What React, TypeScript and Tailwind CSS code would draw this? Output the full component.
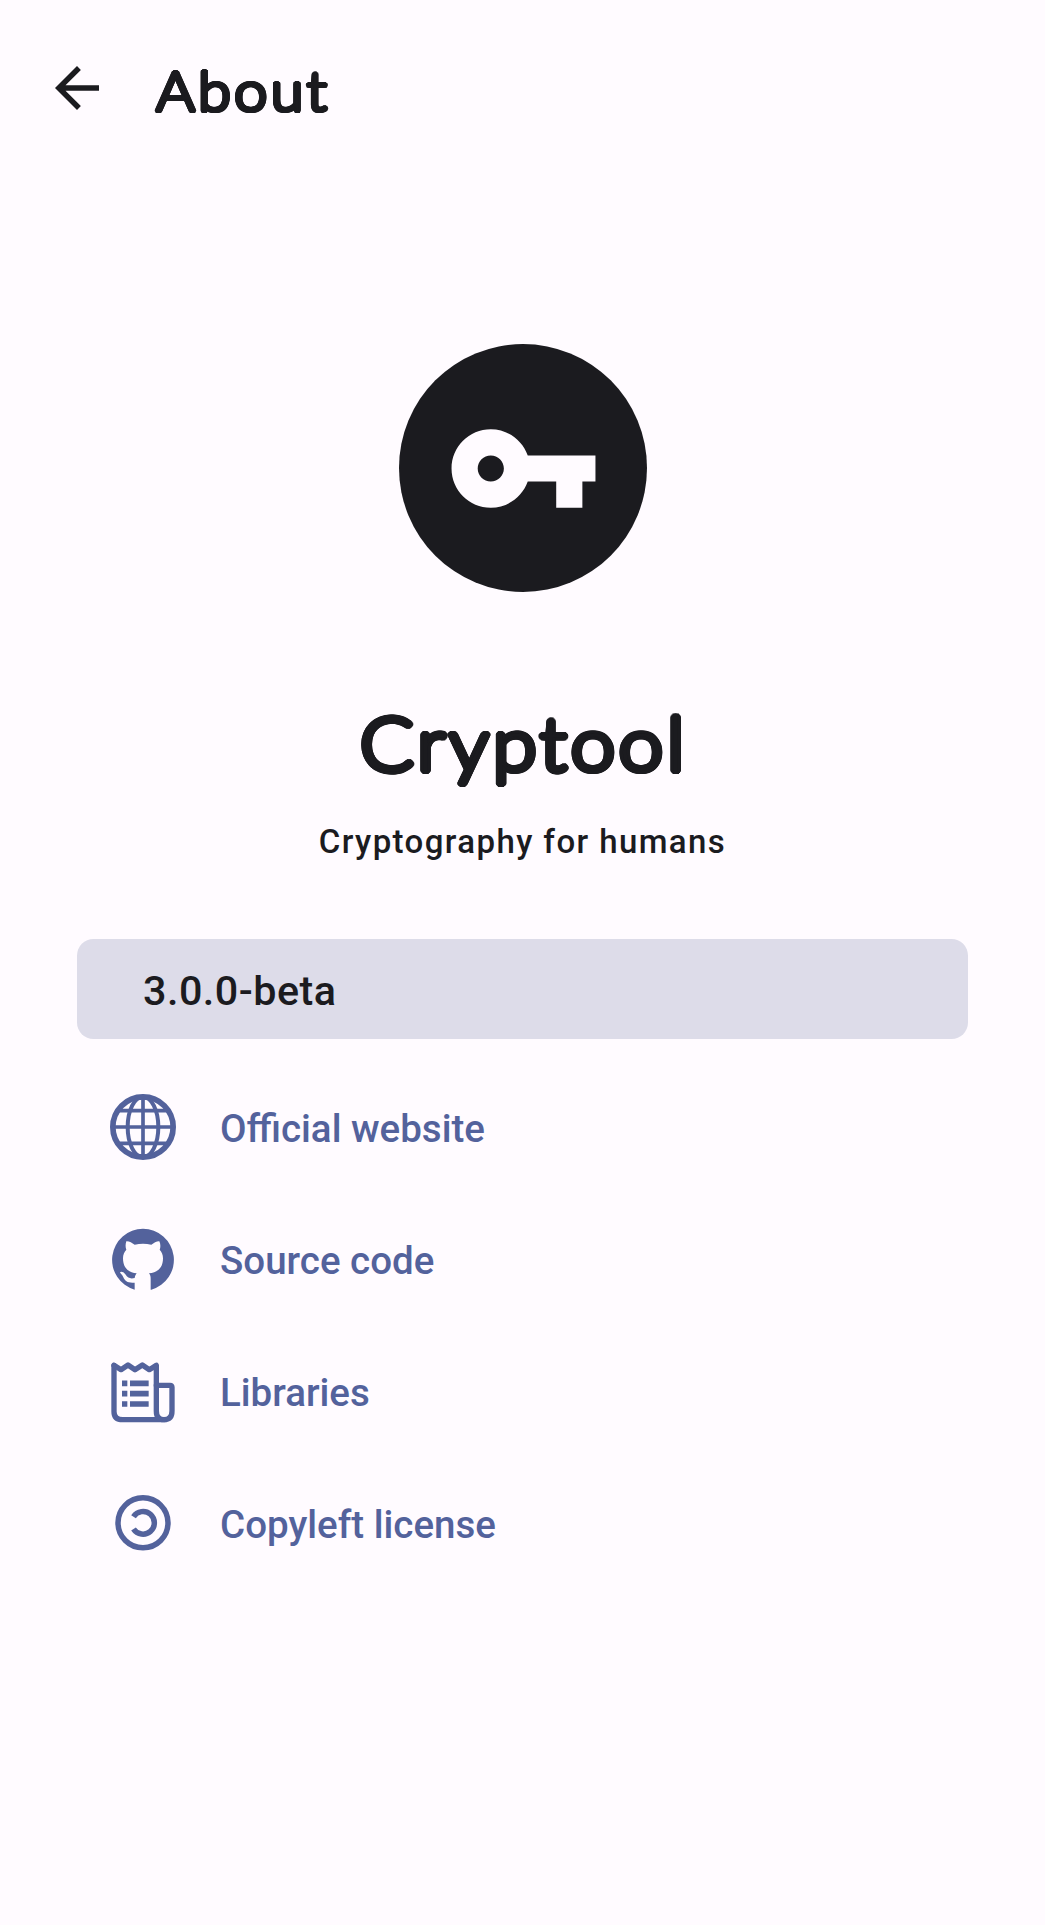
import type { ReactNode } from "react";

const roundedSmall =
  "[text-shadow:2.1px_0_currentColor,-2.1px_0_currentColor,0_2.1px_currentColor,0_-2.1px_currentColor,1.5px_1.5px_currentColor,-1.5px_1.5px_currentColor,1.5px_-1.5px_currentColor,-1.5px_-1.5px_currentColor,1.9px_0.8px_currentColor,-1.9px_0.8px_currentColor,1.9px_-0.8px_currentColor,-1.9px_-0.8px_currentColor,0.8px_1.9px_currentColor,-0.8px_1.9px_currentColor,0.8px_-1.9px_currentColor,-0.8px_-1.9px_currentColor]";

const roundedLarge =
  "[text-shadow:3.1px_0_currentColor,-3.1px_0_currentColor,0_3.1px_currentColor,0_-3.1px_currentColor,2.2px_2.2px_currentColor,-2.2px_2.2px_currentColor,2.2px_-2.2px_currentColor,-2.2px_-2.2px_currentColor,2.9px_1.2px_currentColor,-2.9px_1.2px_currentColor,2.9px_-1.2px_currentColor,-2.9px_-1.2px_currentColor,1.2px_2.9px_currentColor,-1.2px_2.9px_currentColor,1.2px_-2.9px_currentColor,-1.2px_-2.9px_currentColor]";

function BackArrow() {
  return (
    <svg className="size-[66px]" viewBox="0 0 24 24" fill="currentColor" aria-hidden="true">
      <path d="M20 11H7.83l5.59-5.59L12 4l-8 8 8 8 1.41-1.41L7.83 13H20v-2z" />
    </svg>
  );
}

function KeyIcon() {
  return (
    <svg className="size-[157px]" viewBox="0 0 24 24" fill="currentColor" aria-hidden="true">
      <path d="M12.65 10C11.83 7.67 9.61 6 7 6c-3.31 0-6 2.69-6 6s2.69 6 6 6c2.61 0 4.83-1.67 5.65-4H17v4h4v-4h2v-4H12.65zM7 14c-1.1 0-2-.9-2-2s.9-2 2-2 2 .9 2 2-.9 2-2 2z" />
    </svg>
  );
}

function GlobeIcon() {
  return (
    <svg className="size-[66px]" viewBox="60 42 198 198" fill="none" stroke="currentColor" aria-hidden="true">
      <circle cx="159" cy="141" r="90.5" strokeWidth="17" />
      <path strokeWidth="11" d="M159 50v182M68 141h182M84 92h150M84 190h150" />
      <ellipse cx="159" cy="141" rx="46" ry="91" strokeWidth="12" />
    </svg>
  );
}

function GithubIcon() {
  return (
    <svg className="size-[66px]" viewBox="60 33 198 198" fill="currentColor" aria-hidden="true">
      <path d="M159 41.500A93 93 0 0 0 134 224V203C114 205 105 199 100 187C97 179 91 176 90 172C92 169 101 170 106 178C114 190 122 192 134 189C135 183 137 179 140 175C114 172 99 158 99 130C99 119 103 111 109 104C106 96 106 88 109 79C117 78 126 84 134 89Q159 83 184 89C192 84 201 78 208 79C212 88 212 96 209 104C215 111 219 119 219 130C219 158 204 172 177 175C181 180 182 184 182 191V224H184A93 93 0 0 0 159 41.500Z" />
    </svg>
  );
}

function LibrariesIcon() {
  return (
    <svg className="size-[66px]" viewBox="60 24 198 198" fill="none" stroke="currentColor" strokeWidth="16" strokeLinejoin="round" aria-hidden="true">
      <path strokeLinecap="round" d="M72 46V185Q72 209 98 209H222Q246 209 246 183V112Q246 106 240 106H199" />
      <path strokeLinecap="round" d="M72 46L93 59L114 45L135 59L157 45L178 59L199 46V183Q199 209 222 209" />
      <path strokeWidth="17" d="M96 100h16M120 100h56M96 131h16M120 131h56M96 162h16M120 162h56" />
    </svg>
  );
}

function CopyleftIcon() {
  return (
    <svg className="size-[66px]" viewBox="60 30 198 198" fill="none" stroke="currentColor" aria-hidden="true">
      <circle cx="159" cy="128.500" r="75" strokeWidth="16.500" />
      <path strokeWidth="16.500" d="M130.500 110A34 34 0 1 1 130.500 147" />
    </svg>
  );
}

const links: { label: string; icon: ReactNode }[] = [
  { label: "Official website", icon: <GlobeIcon /> },
  { label: "Source code", icon: <GithubIcon /> },
  { label: "Libraries", icon: <LibrariesIcon /> },
  { label: "Copyleft license", icon: <CopyleftIcon /> },
];

export default function App() {
  return (
    <main className="flex h-[1925px] w-[1045px] flex-col overflow-hidden bg-[#fffbff] font-['Roboto',sans-serif] font-medium text-[#1b1b1f]">
      <header className="flex h-[176px] items-center pl-11">
        <button type="button" aria-label="Back">
          <BackArrow />
        </button>
        <h1 className={`ml-[46px] mt-[3px] origin-left scale-x-[1.08] font-['Lato',sans-serif] text-[55px] leading-[80px] font-light tracking-[3.1px] ${roundedSmall}`}>
          About
        </h1>
      </header>

      <section className="mt-[168px] flex flex-col items-center">
        <div className="ml-px flex size-[248px] items-center justify-center rounded-full bg-[#1b1b1f] text-[#fffbff]">
          <KeyIcon />
        </div>
        <h2 className={`mt-[96px] pl-[2px] scale-x-[1.08] font-['Lato',sans-serif] text-[74px] leading-[110px] font-light tracking-[3.3px] ${roundedLarge}`}>
          Cryptool
        </h2>
        <p className="mt-[22px] text-[33px] leading-[44px] tracking-[1.4px]">Cryptography for humans</p>
      </section>

      <section className="mx-[77px] mt-[75px] flex flex-col">
        <div className="flex h-[100px] items-center rounded-[16.5px] bg-[#dddce9] px-[66px] pt-[5px] text-[41.25px] tracking-[0.5px]">
          3.0.0-beta
        </div>
        <ul className="mt-[55px] flex flex-col gap-[66px] pl-[33px] text-[#53629c]">
          {links.map((link) => (
            <li key={link.label}>
              <a href="#" className="flex h-[66px] items-center gap-11 text-[38.5px]">
                {link.icon}
                <span className="mt-[3px]">{link.label}</span>
              </a>
            </li>
          ))}
        </ul>
      </section>
    </main>
  );
}
